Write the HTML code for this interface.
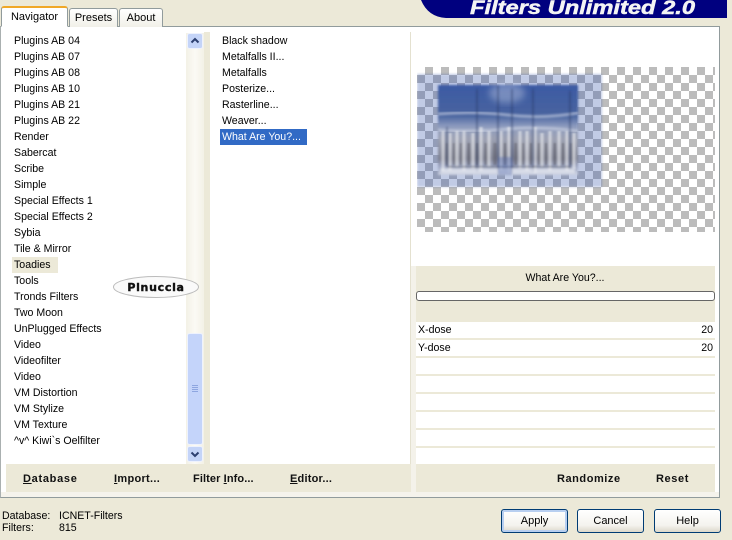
<!DOCTYPE html>
<html>
<head>
<meta charset="utf-8">
<style>
html,body{margin:0;padding:0}
body{width:732px;height:540px;position:relative;overflow:hidden;background:#ece9d8;font-family:"Liberation Sans",sans-serif;font-size:10.6px;color:#000}
.a{position:absolute}
.t{position:absolute;white-space:nowrap;line-height:16px;height:16px}
.b{font-weight:bold;font-size:11px;color:#111;letter-spacing:.3px}
u{text-decoration:underline}
.tab{position:absolute;box-sizing:border-box;border:1px solid #919b9c;border-bottom:none;border-radius:3px 3px 0 0;background:linear-gradient(#fff,#f1f0e8);text-align:center;font-size:11px;line-height:19px}
.line{position:absolute;left:416px;width:299px;height:2px;background:#ece9d8}
.btn{position:absolute;box-sizing:border-box;top:509px;width:67px;height:24px;border:1px solid #003c74;border-radius:3px;background:linear-gradient(#fff,#f4f3ee 70%,#dcd8ca);text-align:center;font-size:11px;line-height:22px}
</style>
</head>
<body>
<!-- banner -->
<svg class="a" style="left:400px;top:0" width="332" height="18"><path d="M21 0H327V18H46Q28 17 21 0Z" fill="#00007f"/><text x="70" y="14" font-family="Liberation Sans" font-weight="bold" font-style="italic" font-size="19" textLength="225" lengthAdjust="spacingAndGlyphs" stroke="#f4f4f4" stroke-width=".5" fill="#f4f4f4">Filters Unlimited 2.0</text></svg>

<!-- main panel -->
<div class="a" style="left:0;top:26px;width:720px;height:472px;box-sizing:border-box;border:1px solid #919b9c;border-left-color:#aab0b0;background:#fff"></div>
<div class="a" style="left:1px;top:492px;width:718px;height:5px;background:#f5f3ec"></div>

<!-- tabs -->
<div class="tab" style="left:69px;top:8px;width:49px;height:19px">Presets</div>
<div class="tab" style="left:119px;top:8px;width:44px;height:19px">About</div>
<div class="tab" style="left:1px;top:6px;width:67px;height:21px;border-top:2px solid #f0a828;background:#fff;line-height:18px;border-bottom:1px solid #fff">Navigator</div>

<!-- left list -->
<div class="a" style="left:12px;top:257px;width:46px;height:16px;background:#ece9d8"></div>
<div class="t" style="left:14px;top:33px">Plugins AB 04</div>
<div class="t" style="left:14px;top:49px">Plugins AB 07</div>
<div class="t" style="left:14px;top:65px">Plugins AB 08</div>
<div class="t" style="left:14px;top:81px">Plugins AB 10</div>
<div class="t" style="left:14px;top:97px">Plugins AB 21</div>
<div class="t" style="left:14px;top:113px">Plugins AB 22</div>
<div class="t" style="left:14px;top:129px">Render</div>
<div class="t" style="left:14px;top:145px">Sabercat</div>
<div class="t" style="left:14px;top:161px">Scribe</div>
<div class="t" style="left:14px;top:177px">Simple</div>
<div class="t" style="left:14px;top:193px">Special Effects 1</div>
<div class="t" style="left:14px;top:209px">Special Effects 2</div>
<div class="t" style="left:14px;top:225px">Sybia</div>
<div class="t" style="left:14px;top:241px">Tile &amp; Mirror</div>
<div class="t" style="left:14px;top:257px">Toadies</div>
<div class="t" style="left:14px;top:273px">Tools</div>
<div class="t" style="left:14px;top:289px">Tronds Filters</div>
<div class="t" style="left:14px;top:305px">Two Moon</div>
<div class="t" style="left:14px;top:321px">UnPlugged Effects</div>
<div class="t" style="left:14px;top:337px">Video</div>
<div class="t" style="left:14px;top:353px">Videofilter</div>
<div class="t" style="left:14px;top:369px">Video</div>
<div class="t" style="left:14px;top:385px">VM Distortion</div>
<div class="t" style="left:14px;top:401px">VM Stylize</div>
<div class="t" style="left:14px;top:417px">VM Texture</div>
<div class="t" style="left:14px;top:433px">^v^ Kiwi`s Oelfilter</div>

<!-- scrollbar -->
<div class="a" style="left:186px;top:33px;width:18px;height:431px;background:linear-gradient(90deg,#f3f1e6,#fbfaf5 50%,#f3f1e6)"></div>
<div class="a" style="left:204px;top:32px;width:6px;height:432px;background:#ece9d8"></div>
<svg class="a" style="left:187px;top:33px" width="16" height="431">
<rect x=".5" y=".5" width="15" height="15" rx="2" fill="#c4d4f8" stroke="#eef2fd"/>
<path d="M4.500 9.500L8 6L11.500 9.500" fill="none" stroke="#2c3f70" stroke-width="2"/>
<rect x=".5" y="300.500" width="15" height="111" rx="2" fill="#c4d4fa" stroke="#eef2fd"/>
<path d="M5 352.500h6M5 354.500h6M5 356.500h6M5 358.500h6" stroke="#8ea6e0"/>
<rect x=".5" y="413.500" width="15" height="15" rx="2" fill="#c4d4f8" stroke="#eef2fd"/>
<path d="M4.500 419.500L8 423L11.500 419.500" fill="none" stroke="#2c3f70" stroke-width="2"/>
</svg>

<!-- watermark -->
<svg class="a" style="left:110px;top:272px" width="94" height="30"><ellipse cx="46" cy="15" rx="42.500" ry="10.500" fill="#fafafa" stroke="#bbb"/><text x="46" y="19" text-anchor="middle" font-family="DejaVu Sans" font-weight="bold" font-size="11" letter-spacing="0.700" fill="#111" stroke="#111" stroke-width=".4">Pinuccia</text></svg>

<!-- middle list -->
<div class="a" style="left:220px;top:129px;width:87px;height:16px;background:#316ac5"></div>
<div class="t" style="left:222px;top:33px">Black shadow</div>
<div class="t" style="left:222px;top:49px">Metalfalls II...</div>
<div class="t" style="left:222px;top:65px">Metalfalls</div>
<div class="t" style="left:222px;top:81px">Posterize...</div>
<div class="t" style="left:222px;top:97px">Rasterline...</div>
<div class="t" style="left:222px;top:113px">Weaver...</div>
<div class="t" style="left:222px;top:129px;color:#fff">What Are You?...</div>

<div class="a" style="left:410px;top:32px;width:1px;height:432px;background:#e4e1d0"></div>
<div class="a" style="left:411px;top:266px;width:5px;height:226px;background:#f4f2ea"></div>

<!-- preview -->
<svg class="a" style="left:417px;top:67px" width="298" height="165">
<defs>
<pattern id="c" width="16" height="16" patternUnits="userSpaceOnUse"><rect width="16" height="16" fill="#fff"/><rect x="8" width="8" height="8" fill="#bcbcbc"/><rect y="8" width="8" height="8" fill="#bcbcbc"/></pattern>
<linearGradient id="g" x1="0" y1="0" x2="0" y2="1"><stop offset="0" stop-color="#3c5aa4"/><stop offset=".34" stop-color="#49649f"/><stop offset=".46" stop-color="#8e9cbf"/><stop offset=".6" stop-color="#9ca1b2"/><stop offset=".82" stop-color="#7c7f90"/><stop offset=".9" stop-color="#9aa3c0"/><stop offset="1" stop-color="#ccd2e2"/></linearGradient>
<filter id="bl" x="-20%" y="-20%" width="140%" height="140%"><feGaussianBlur stdDeviation="3.500"/></filter>
<filter id="b1" x="-5%" y="-5%" width="110%" height="110%"><feGaussianBlur stdDeviation="1"/></filter>
<filter id="b2" x="-5%" y="-5%" width="110%" height="110%"><feGaussianBlur stdDeviation="1.400 .8"/></filter>
</defs>
<rect width="298" height="165" fill="url(#c)"/>
<rect x="0" y="7" width="185" height="113" fill="#3f5fb0" opacity=".32" filter="url(#b1)"/>
<rect x="21" y="18" width="140" height="90" fill="url(#g)" filter="url(#b1)"/>
<ellipse cx="90" cy="26" rx="18" ry="10" fill="#c9d2e6" opacity=".4" filter="url(#bl)"/>
<path d="M21 47q35-3 70 1t70-2M21 63q40 2 70-1t70 2" stroke="#d4daea" stroke-width="3" opacity=".55" fill="none" filter="url(#b1)"/>
<g filter="url(#b2)" stroke-width="2.500">
<path d="M26 64V104M33 66V104M40 64V100M47 64V104M56 66V102M64 60V104M72 64V100M84 64V104M92 60V106M103 64V102M110 64V104M118 60V106M125 66V100M133 64V104M142 64V100M150 64V104M157 66V102" stroke="#f2f3f6" opacity=".8"/>
<path d="M30 76V98M37 76V98M44 76V98M52 76V98M60 76V98M69 76V98M78 76V98M88 76V98M99 76V98M106 76V98M114 76V98M122 76V98M129 76V98M138 76V98M146 76V98M154 76V98" stroke="#55585f" opacity=".6"/>
</g>
<g filter="url(#b1)">
<path d="M60 22V105M81 18V106M95 22V106M116 22V105M153 24V102M30 60V100" stroke="#25345f" stroke-width="1.300" opacity=".6"/>
<path d="M30 100H154" stroke="#3a4050" stroke-width="1.200" opacity=".65"/>
<path d="M24 104H158" stroke="#e6e9f1" stroke-width="5" opacity=".7"/>
<path d="M88 90V108" stroke="#4f69ad" stroke-width="14" opacity=".4"/>
</g>
</svg>

<!-- right panel -->
<div class="a" style="left:416px;top:266px;width:299px;height:56px;background:#ece9d8"></div>
<div class="t" style="left:416px;top:270px;width:298px;text-align:center">What Are You?...</div>
<div class="a" style="left:416px;top:291px;width:299px;height:10px;box-sizing:border-box;background:#fff;border:1px solid #666;border-radius:3px"></div>
<div class="t" style="left:418px;top:322px">X-dose</div>
<div class="t" style="left:418px;top:340px">Y-dose</div>
<div class="t" style="left:680px;top:322px;width:33px;text-align:right">20</div>
<div class="t" style="left:680px;top:340px;width:33px;text-align:right">20</div>
<div class="line" style="top:338px"></div>
<div class="line" style="top:356px"></div>
<div class="line" style="top:374px"></div>
<div class="line" style="top:392px"></div>
<div class="line" style="top:410px"></div>
<div class="line" style="top:428px"></div>
<div class="line" style="top:446px"></div>

<!-- bottom bars -->
<div class="a" style="left:6px;top:464px;width:405px;height:28px;background:#ece9d8"></div>
<div class="a" style="left:416px;top:464px;width:299px;height:28px;background:#ece9d8"></div>
<div class="t b" style="left:23px;top:471px;letter-spacing:.7px"><u>D</u>atabase</div>
<div class="t b" style="left:114px;top:471px"><u>I</u>mport...</div>
<div class="t b" style="left:193px;top:471px;letter-spacing:.1px"><span>Filter </span><u>I</u>nfo...</div>
<div class="t b" style="left:290px;top:471px;letter-spacing:.2px"><u>E</u>ditor...</div>
<div class="t b" style="left:557px;top:471px;letter-spacing:.55px">Randomize</div>
<div class="t b" style="left:656px;top:471px;letter-spacing:.6px">Reset</div>

<!-- status -->
<div class="t" style="left:2px;top:508px">Database:</div>
<div class="t" style="left:59px;top:508px">ICNET-Filters</div>
<div class="t" style="left:2px;top:520px">Filters:</div>
<div class="t" style="left:59px;top:520px">815</div>

<!-- buttons -->
<div class="btn" style="left:501px;box-shadow:inset 0 0 0 2px #b8cff0">Apply</div>
<div class="btn" style="left:577px">Cancel</div>
<div class="btn" style="left:654px">Help</div>
</body>
</html>
